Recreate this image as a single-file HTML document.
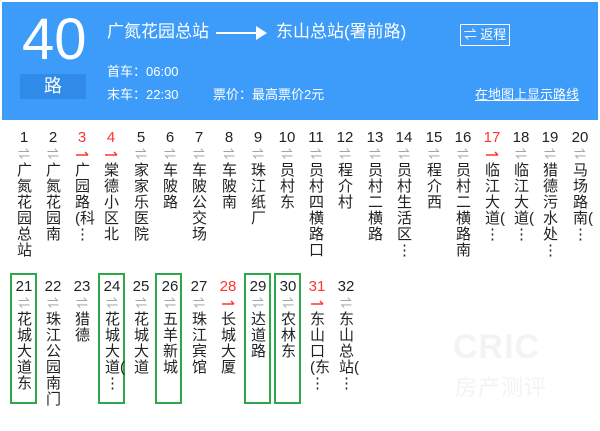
<!DOCTYPE html>
<html><head><meta charset="utf-8"><style>
body{margin:0;width:600px;height:431px;background:#fff;position:relative;overflow:hidden;font-family:"Liberation Sans","Noto Sans CJK SC",sans-serif;}
.hd{position:absolute;left:2px;top:2px;width:596px;height:118px;background:#3d9cfa;color:#fff;}
.hd div{position:absolute;white-space:nowrap;}
.c{position:absolute;width:26px;text-align:center;color:#222;}
.c .n{position:absolute;top:0;width:26px;font-size:15px;line-height:16px;}
.c .a{position:absolute;top:18px;width:26px;font-size:12px;line-height:12px;color:#999;}
.c .t{position:absolute;top:33px;left:6px;width:21px;text-align:left;font-size:15px;line-height:16px;word-break:break-all;white-space:nowrap;}
.r .n{color:#f33;}
.box{position:absolute;width:23px;height:127px;border:2.5px solid #2aa84a;top:273px;}
</style></head><body>
<div class="hd">
<div style="left:20px;top:8px;font-size:58px;line-height:60px;">40</div>
<div style="left:18px;top:72px;width:66px;height:25px;background:#2f8ae8;text-align:center;font-size:18px;line-height:25px;">路</div>
<div style="left:105px;top:18px;font-size:17px;line-height:24px;">广氮花园总站</div>
<div style="left:214px;top:30px;width:48px;height:2px;background:#fff;"></div>
<div style="left:254px;top:24px;width:0;height:0;border-left:11px solid #fff;border-top:7px solid transparent;border-bottom:7px solid transparent;"></div>
<div style="left:274px;top:18px;font-size:17px;line-height:24px;">东山总站(署前路)</div>
<div style="left:458px;top:22px;width:48px;height:20px;border:1px solid #fff;font-size:13px;line-height:20px;text-align:center;">⇌ 返程</div>
<div style="left:105px;top:61px;font-size:13px;line-height:18px;">首车：06:00</div>
<div style="left:105px;top:84px;font-size:13px;line-height:18px;">末车：22:30</div>
<div style="left:211px;top:84px;font-size:13px;line-height:18px;">票价：最高票价2元</div>
<div style="left:473px;top:84px;font-size:13px;line-height:18px;text-decoration:underline;">在地图上显示路线</div>
</div>

<div style="position:absolute;left:453px;top:328px;font-size:34px;font-weight:bold;color:#f3f3f6;letter-spacing:1px;">CRIC</div>
<div style="position:absolute;left:455px;top:370px;font-size:22px;color:#f3f3f6;letter-spacing:1px;">房产测评</div>

<div class="c" style="left:11px;top:130px"><div class="n">1</div><div class="a">⇌</div><div class="t">广<br>氮<br>花<br>园<br>总<br>站</div></div>
<div class="c" style="left:40px;top:130px"><div class="n">2</div><div class="a">⇌</div><div class="t">广<br>氮<br>花<br>园<br>南</div></div>
<div class="c r" style="left:69px;top:130px"><div class="n">3</div><div class="a"><svg width="26" height="12"><path d="M7 7H19M19 7L16 4" stroke="#f33" stroke-width="1.5" fill="none"/></svg></div><div class="t">广<br>园<br>路<br>(科<br>⋮</div></div>
<div class="c r" style="left:98px;top:130px"><div class="n">4</div><div class="a"><svg width="26" height="12"><path d="M7 7H19M19 7L16 4" stroke="#f33" stroke-width="1.5" fill="none"/></svg></div><div class="t">棠<br>德<br>小<br>区<br>北</div></div>
<div class="c" style="left:128px;top:130px"><div class="n">5</div><div class="a">⇌</div><div class="t">家<br>家<br>乐<br>医<br>院</div></div>
<div class="c" style="left:157px;top:130px"><div class="n">6</div><div class="a">⇌</div><div class="t">车<br>陂<br>路</div></div>
<div class="c" style="left:186px;top:130px"><div class="n">7</div><div class="a">⇌</div><div class="t">车<br>陂<br>公<br>交<br>场</div></div>
<div class="c" style="left:216px;top:130px"><div class="n">8</div><div class="a">⇌</div><div class="t">车<br>陂<br>南</div></div>
<div class="c" style="left:245px;top:130px"><div class="n">9</div><div class="a">⇌</div><div class="t">珠<br>江<br>纸<br>厂</div></div>
<div class="c" style="left:274px;top:130px"><div class="n">10</div><div class="a">⇌</div><div class="t">员<br>村<br>东</div></div>
<div class="c" style="left:303px;top:130px"><div class="n">11</div><div class="a">⇌</div><div class="t">员<br>村<br>四<br>横<br>路<br>口</div></div>
<div class="c" style="left:332px;top:130px"><div class="n">12</div><div class="a">⇌</div><div class="t">程<br>介<br>村</div></div>
<div class="c" style="left:362px;top:130px"><div class="n">13</div><div class="a">⇌</div><div class="t">员<br>村<br>二<br>横<br>路</div></div>
<div class="c" style="left:391px;top:130px"><div class="n">14</div><div class="a">⇌</div><div class="t">员<br>村<br>生<br>活<br>区<br>⋮</div></div>
<div class="c" style="left:421px;top:130px"><div class="n">15</div><div class="a">⇌</div><div class="t">程<br>介<br>西</div></div>
<div class="c" style="left:450px;top:130px"><div class="n">16</div><div class="a">⇌</div><div class="t">员<br>村<br>二<br>横<br>路<br>南</div></div>
<div class="c r" style="left:479px;top:130px"><div class="n">17</div><div class="a"><svg width="26" height="12"><path d="M7 7H19M19 7L16 4" stroke="#f33" stroke-width="1.5" fill="none"/></svg></div><div class="t">临<br>江<br>大<br>道(<br>⋮</div></div>
<div class="c" style="left:508px;top:130px"><div class="n">18</div><div class="a">⇌</div><div class="t">临<br>江<br>大<br>道(<br>⋮</div></div>
<div class="c" style="left:537px;top:130px"><div class="n">19</div><div class="a">⇌</div><div class="t">猎<br>德<br>污<br>水<br>处<br>⋮</div></div>
<div class="c" style="left:567px;top:130px"><div class="n">20</div><div class="a">⇌</div><div class="t">马<br>场<br>路<br>南(<br>⋮</div></div>

<div class="box" style="left:10px"></div>
<div class="box" style="left:98px"></div>
<div class="box" style="left:155px"></div>
<div class="box" style="left:244px"></div>
<div class="box" style="left:274px"></div>

<div class="c" style="left:11px;top:279px"><div class="n">21</div><div class="a">⇌</div><div class="t">花<br>城<br>大<br>道<br>东</div></div>
<div class="c" style="left:40px;top:279px"><div class="n">22</div><div class="a">⇌</div><div class="t">珠<br>江<br>公<br>园<br>南<br>门</div></div>
<div class="c" style="left:69px;top:279px"><div class="n">23</div><div class="a">⇌</div><div class="t">猎<br>德</div></div>
<div class="c" style="left:99px;top:279px"><div class="n">24</div><div class="a">⇌</div><div class="t">花<br>城<br>大<br>道(<br>⋮</div></div>
<div class="c" style="left:128px;top:279px"><div class="n">25</div><div class="a">⇌</div><div class="t">花<br>城<br>大<br>道</div></div>
<div class="c" style="left:157px;top:279px"><div class="n">26</div><div class="a">⇌</div><div class="t">五<br>羊<br>新<br>城</div></div>
<div class="c" style="left:186px;top:279px"><div class="n">27</div><div class="a">⇌</div><div class="t">珠<br>江<br>宾<br>馆</div></div>
<div class="c r" style="left:215px;top:279px"><div class="n">28</div><div class="a"><svg width="26" height="12"><path d="M7 7H19M19 7L16 4" stroke="#f33" stroke-width="1.5" fill="none"/></svg></div><div class="t">长<br>城<br>大<br>厦</div></div>
<div class="c" style="left:245px;top:279px"><div class="n">29</div><div class="a">⇌</div><div class="t">达<br>道<br>路</div></div>
<div class="c" style="left:275px;top:279px"><div class="n">30</div><div class="a">⇌</div><div class="t">农<br>林<br>东</div></div>
<div class="c r" style="left:304px;top:279px"><div class="n">31</div><div class="a"><svg width="26" height="12"><path d="M7 7H19M19 7L16 4" stroke="#f33" stroke-width="1.5" fill="none"/></svg></div><div class="t">东<br>山<br>口<br>(东<br>⋮</div></div>
<div class="c" style="left:333px;top:279px"><div class="n">32</div><div class="a">⇌</div><div class="t">东<br>山<br>总<br>站(<br>⋮</div></div>
</body></html>
